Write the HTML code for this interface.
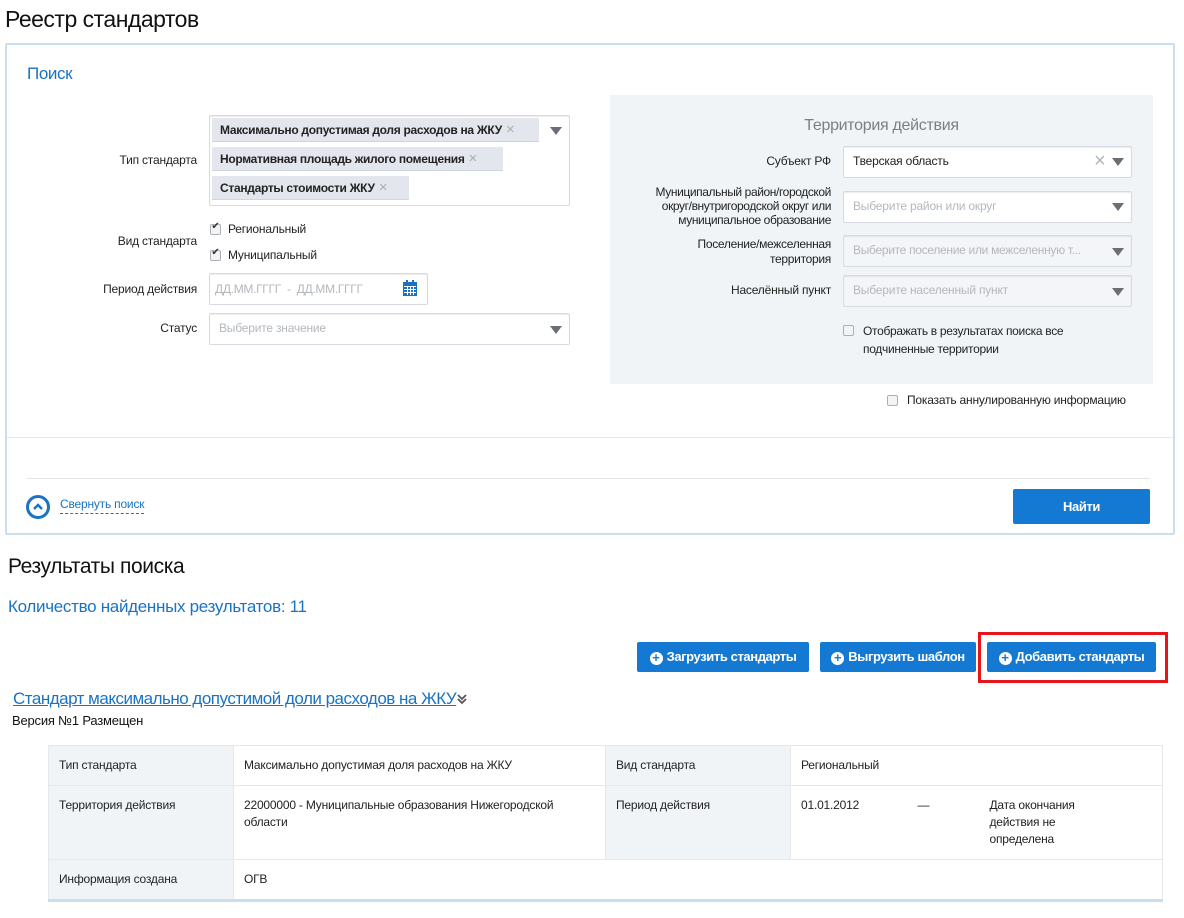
<!DOCTYPE html>
<html><head><meta charset="utf-8"><style>
*{box-sizing:border-box;margin:0;padding:0}
body{width:1184px;height:918px;background:#fff;position:relative;font-family:"Liberation Sans",sans-serif;color:#222;overflow:hidden;font-size:12px;letter-spacing:-0.2px}
.a{position:absolute;white-space:nowrap}
.r{text-align:right}
.box{position:absolute;border:1px solid #d6dbe1;border-radius:2px;background:#fff;box-shadow:inset 0 1px 1px rgba(0,0,0,.08)}
.dis{background:#f3f5f8}
.tri{position:absolute;width:0;height:0;border-left:6px solid transparent;border-right:6px solid transparent;border-top:8px solid #6a6f75}
.ph{color:#b3b8bd}
.tag{position:absolute;background:#e3e7ed;border-bottom:1px solid #cfd5dc;height:24px;line-height:24px;padding-left:8px;font-weight:bold;font-size:12px;letter-spacing:-0.3px;color:#222;white-space:nowrap}
.x{color:#a9aeb4;font-weight:normal;font-size:15px;margin-left:4px}
.cb{position:absolute;width:11px;height:11px;border:1px solid #aab0b6;border-radius:2px;background:#f4f4f4}
.btn{position:absolute;background:#1479d2;color:#fff;border-radius:2px;font-weight:bold;font-size:13px;letter-spacing:-0.4px;text-align:center;line-height:30px;height:30px;white-space:nowrap}
.pl{display:inline-block;width:13px;height:13px;border-radius:50%;background:#fff;color:#1479d2;font-size:13px;line-height:12px;text-align:center;vertical-align:-1px;margin-right:4px;font-weight:bold;letter-spacing:0}
td{border:1px solid #e5e8ec;vertical-align:top;padding:11px 10px;font-size:12px;line-height:17px}
td.g{background:#f1f4f7}
</style></head><body>
<div class="a" style="left:5px;top:6px;font-size:23px;color:#111;letter-spacing:-0.5px">Реестр стандартов</div>
<div style="position:absolute;left:5px;top:43px;width:1170px;height:492px;border:2px solid #c9dff1;border-radius:2px"></div>
<div class="a" style="left:27px;top:64px;font-size:17px;color:#1a73c2;letter-spacing:-0.4px">Поиск</div>

<div class="a r" style="left:60px;width:137px;top:153px">Тип стандарта</div>
<div class="box" style="left:209px;top:115px;width:361px;height:91px"></div>
<div class="tag" style="left:212px;top:118px;width:327px">Максимально допустимая доля расходов на ЖКУ<span class="x">×</span></div>
<div class="tag" style="left:212px;top:147px;width:291px">Нормативная площадь жилого помещения<span class="x">×</span></div>
<div class="tag" style="left:212px;top:176px;width:197px">Стандарты стоимости ЖКУ<span class="x">×</span></div>
<div class="tri" style="left:550px;top:127px"></div>

<div class="a r" style="left:60px;width:137px;top:234px">Вид стандарта</div>
<div class="cb" style="left:210px;top:224px"></div><div class="a" style="left:210px;top:221px;font-size:10px;color:#333;width:11px;text-align:center">✔</div>
<div class="a" style="left:228px;top:222px">Региональный</div>
<div class="cb" style="left:210px;top:250px"></div><div class="a" style="left:210px;top:247px;font-size:10px;color:#333;width:11px;text-align:center">✔</div>
<div class="a" style="left:228px;top:248px">Муниципальный</div>

<div class="a r" style="left:60px;width:137px;top:282px">Период действия</div>
<div class="box" style="left:209px;top:273px;width:219px;height:32px"></div>
<div class="a ph" style="left:215px;top:282px;letter-spacing:-0.3px">ДД.ММ.ГГГГ &nbsp;- &nbsp;ДД.ММ.ГГГГ</div>
<svg class="a" style="left:403px;top:280px" width="14" height="16"><rect x="0" y="2" width="14" height="14" fill="#1a73c2"/><rect x="3" y="0" width="2" height="4" fill="#1a73c2"/><rect x="9" y="0" width="2" height="4" fill="#1a73c2"/><g fill="#fff"><rect x="1" y="6" width="12" height="1"/><rect x="1" y="9" width="12" height="1"/><rect x="1" y="12" width="12" height="1"/><rect x="4" y="6" width="1" height="9"/><rect x="7" y="6" width="1" height="9"/><rect x="10" y="6" width="1" height="9"/></g></svg>

<div class="a r" style="left:60px;width:137px;top:321px">Статус</div>
<div class="box" style="left:209px;top:313px;width:361px;height:32px"></div>
<div class="a ph" style="left:219px;top:321px">Выберите значение</div>
<div class="tri" style="left:550px;top:326px"></div>

<div style="position:absolute;left:610px;top:95px;width:543px;height:289px;background:#f1f4f7"></div>
<div class="a" style="left:610px;width:543px;text-align:center;top:117px;font-size:16px;color:#7a7f85;letter-spacing:-0.3px">Территория действия</div>
<div class="a r" style="left:620px;width:211px;top:154px">Субъект РФ</div>
<div class="box" style="left:843px;top:146px;width:289px;height:32px"></div>
<div class="a" style="left:853px;top:154px">Тверская область</div>
<div class="a" style="left:1094px;top:150px;font-size:20px;color:#b0b5ba">×</div>
<div class="tri" style="left:1112px;top:158px"></div>
<div class="a r" style="left:600px;width:231px;top:185px;line-height:14px;letter-spacing:-0.4px">Муниципальный район/городской<br>округ/внутригородской округ или<br>муниципальное образование</div>
<div class="box" style="left:843px;top:191px;width:289px;height:32px"></div>
<div class="a ph" style="left:853px;top:199px">Выберите район или округ</div>
<div class="tri" style="left:1112px;top:203px"></div>
<div class="a r" style="left:620px;width:211px;top:237px;line-height:15px;letter-spacing:-0.3px">Поселение/межселенная<br>территория</div>
<div class="box dis" style="left:843px;top:235px;width:289px;height:32px"></div>
<div class="a ph" style="left:853px;top:243px;letter-spacing:-0.3px">Выберите поселение или межселенную т...</div>
<div class="tri" style="left:1112px;top:248px"></div>
<div class="a r" style="left:620px;width:211px;top:283px">Населённый пункт</div>
<div class="box dis" style="left:843px;top:275px;width:289px;height:32px"></div>
<div class="a ph" style="left:853px;top:283px">Выберите населенный пункт</div>
<div class="tri" style="left:1112px;top:288px"></div>
<div class="cb" style="left:843px;top:325px"></div>
<div class="a" style="left:863px;top:322px;line-height:18px;letter-spacing:-0.3px">Отображать в результатах поиска все<br>подчиненные территории</div>
<div class="cb" style="left:887px;top:395px"></div>
<div class="a" style="left:907px;top:393px;letter-spacing:-0.2px">Показать аннулированную информацию</div>

<div style="position:absolute;left:7px;top:437px;width:1166px;height:1px;background:#e5e8ec"></div>
<div style="position:absolute;left:27px;top:478px;width:1123px;height:1px;background:#e1e4e8"></div>
<div style="position:absolute;left:26px;top:495px;width:24px;height:24px;border:3px solid #1a73c2;border-radius:50%"></div>
<svg class="a" style="left:31px;top:500px" width="14" height="14"><path d="M3 9 L7 5 L11 9" stroke="#1a73c2" stroke-width="2.5" fill="none"/></svg>
<div class="a" style="left:60px;top:497px;font-size:12px;color:#1a73c2;border-bottom:1px dashed #1a73c2;padding-bottom:2px;letter-spacing:-0.2px">Свернуть поиск</div>
<div class="btn" style="left:1013px;top:489px;width:137px;height:35px;line-height:35px">Найти</div>

<div class="a" style="left:8px;top:555px;font-size:21px;color:#111;letter-spacing:-0.4px">Результаты поиска</div>
<div class="a" style="left:8px;top:597px;font-size:17px;color:#1a73c2;letter-spacing:-0.3px">Количество найденных результатов: 11</div>
<div class="btn" style="left:637px;top:642px;width:172px"><span class="pl">+</span>Загрузить стандарты</div>
<div class="btn" style="left:820px;top:642px;width:156px"><span class="pl">+</span>Выгрузить шаблон</div>
<div class="btn" style="left:987px;top:642px;width:169px"><span class="pl">+</span>Добавить стандарты</div>
<div style="position:absolute;left:978px;top:632px;width:190px;height:51px;border:3px solid #e8141a"></div>

<div class="a" style="left:13px;top:689px;font-size:17px;color:#1a73c2;text-decoration:underline;letter-spacing:-0.5px">Стандарт максимально допустимой доли расходов на ЖКУ</div>
<svg class="a" style="left:456px;top:693px" width="12" height="12"><path d="M2 2 L6 6 L10 2 M2 6 L6 10 L10 6" stroke="#555" stroke-width="1.8" fill="none"/></svg>
<div class="a" style="left:12px;top:713px;font-size:13px;color:#111">Версия №1 Размещен</div>

<table style="position:absolute;left:48px;top:745px;width:1115px;border-collapse:collapse;border-bottom:3px solid #c9dff1">
<tr style="height:38px"><td class="g" style="width:185px">Тип стандарта</td><td style="width:372px">Максимально допустимая доля расходов на ЖКУ</td><td class="g" style="width:185px">Вид стандарта</td><td colspan="3">Региональный</td></tr>
<tr style="height:72px"><td class="g">Территория действия</td><td>22000000 - Муниципальные образования Нижегородской<br>области</td><td class="g">Период действия</td><td style="width:117px;border-right:none">01.01.2012</td><td style="width:72px;border-left:none;border-right:none">—</td><td style="border-left:none">Дата окончания<br>действия не<br>определена</td></tr>
<tr style="height:38px"><td class="g">Информация создана</td><td colspan="5">ОГВ</td></tr>
</table>
</body></html>
